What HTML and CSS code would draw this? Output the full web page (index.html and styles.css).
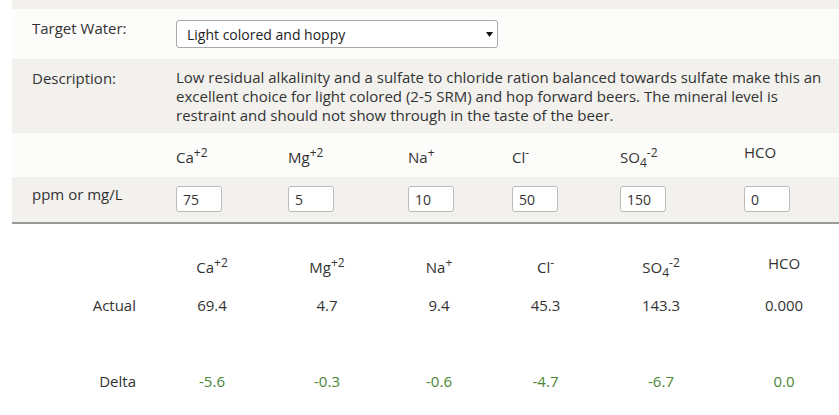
FILE: index.html
```html
<!DOCTYPE html>
<html lang="en">
<head>
<meta charset="UTF-8">
<meta name="viewport" content="width=device-width, initial-scale=1.0">
<title>Water Profile</title>
<link rel="stylesheet" href="styles.css">
</head>
<body>
<div class="settings">
    <div class="band"></div>
    <div class="row row-light target-row">
        <div class="label">Target Water:</div>
        <div class="picker">
            <select class="target-select">
                <option>Light colored and hoppy</option>
            </select>
            <svg class="picker-arrow" width="7" height="5" viewBox="0 0 7 5"><path d="M0 0H7L3.5 5Z" fill="#111"/></svg>
        </div>
    </div>
    <div class="row row-shade desc-row">
        <div class="label">Description:</div>
        <p class="desc">Low residual alkalinity and a sulfate to chloride ration balanced towards sulfate make this an excellent choice for light colored (2-5 SRM) and hop forward beers. The mineral level is restraint and should not show through in the taste of the beer.</p>
    </div>
    <div class="row row-light ion-grid head-row">
        <div class="label"></div>
        <div>Ca<sup>+2</sup></div>
        <div>Mg<sup>+2</sup></div>
        <div>Na<sup>+</sup></div>
        <div>Cl<sup>-</sup></div>
        <div>SO<sub>4</sub><sup>-2</sup></div>
        <div class="ion-plain">HCO</div>
    </div>
    <div class="row row-shade ion-grid ppm-row">
        <div class="label">ppm or mg/L</div>
        <div><input class="ppm" type="text" value="75"></div>
        <div><input class="ppm" type="text" value="5"></div>
        <div><input class="ppm" type="text" value="10"></div>
        <div><input class="ppm" type="text" value="50"></div>
        <div><input class="ppm" type="text" value="150"></div>
        <div><input class="ppm" type="text" value="0"></div>
    </div>
</div>

<div class="results">
    <div class="result-row">
        <div class="result-label"></div>
        <div>Ca<sup>+2</sup></div>
        <div>Mg<sup>+2</sup></div>
        <div>Na<sup>+</sup></div>
        <div>Cl<sup>-</sup></div>
        <div>SO<sub>4</sub><sup>-2</sup></div>
        <div class="ion-plain">HCO</div>
    </div>
    <div class="result-row">
        <div class="result-label">Actual</div>
        <div>69.4</div>
        <div>4.7</div>
        <div>9.4</div>
        <div>45.3</div>
        <div>143.3</div>
        <div>0.000</div>
    </div>
    <div class="result-row delta-row">
        <div class="result-label">Delta</div>
        <div class="delta">-5.6</div>
        <div class="delta">-0.3</div>
        <div class="delta">-0.6</div>
        <div class="delta">-4.7</div>
        <div class="delta">-6.7</div>
        <div class="delta">0.0</div>
    </div>
</div>
</body>
</html>
```

FILE: styles.css
```css
body {
    margin: 0;
    font-family: "Open Sans", sans-serif;
    font-size: 15px;
    color: #333;
    background-color: #fff;
}
sup, sub {
    font-size: 80%;
    line-height: 0;
}
.settings {
    margin-left: 12px;
}
.band {
    height: 9px;
    background-color: #f2f1ee;
}
.row {
    display: grid;
    grid-template-columns: 164px 1fr;
    line-height: 20px;
}
.row-light {
    background-color: #fcfcfb;
}
.row-shade {
    background-color: #f2f1ee;
}
.label {
    padding-left: 20px;
}
.ion-grid {
    grid-template-columns: 164px 112px 120px 104px 108px 124px 1fr;
}
.target-row {
    height: 50px;
}
.target-row .label {
    padding-top: 9px;
}
.picker {
    position: relative;
    width: 322px;
    height: 28px;
    margin-top: 11px;
}
.target-select {
    width: 100%;
    height: 100%;
    box-sizing: border-box;
    -webkit-appearance: none;
    appearance: none;
    border: 1px solid #aaa;
    border-radius: 3px;
    background-color: #fff;
    font-family: inherit;
    font-size: 14px;
    color: #222;
    padding: 0 10px;
    outline: none;
}
.picker-arrow {
    position: absolute;
    right: 5px;
    top: 12px;
    pointer-events: none;
}
.desc-row {
    padding: 9px 0 8px;
}
.desc {
    margin: 0;
    line-height: 19px;
    padding-right: 12px;
}
.head-row {
    padding: 14px 0 10px;
}
.ion-plain {
    margin-top: -5px;
}
.ppm-row {
    height: 45px;
    border-bottom: 2px solid #999;
}
.ppm-row .label {
    padding-top: 7px;
}
.ppm {
    width: 46px;
    height: 26px;
    box-sizing: border-box;
    margin-top: 9px;
    border: 1px solid #bbb;
    border-radius: 3px;
    padding: 0 6px;
    font-family: inherit;
    font-size: 14px;
    color: #333;
    background-color: #fff;
}
.results {
    display: flex;
    flex-direction: column;
    gap: 18px;
    padding-top: 33px;
    margin-left: 12px;
}
.result-row {
    display: grid;
    grid-template-columns: 136px 128px 102px 122px 91px 140px 106px;
    line-height: 20px;
    text-align: center;
}
.result-label {
    text-align: right;
    padding-right: 12px;
}
.results .ion-plain {
    margin-top: -4px;
}
.delta-row {
    margin-top: 38px;
}
.delta {
    color: #4a8735;
}
```
